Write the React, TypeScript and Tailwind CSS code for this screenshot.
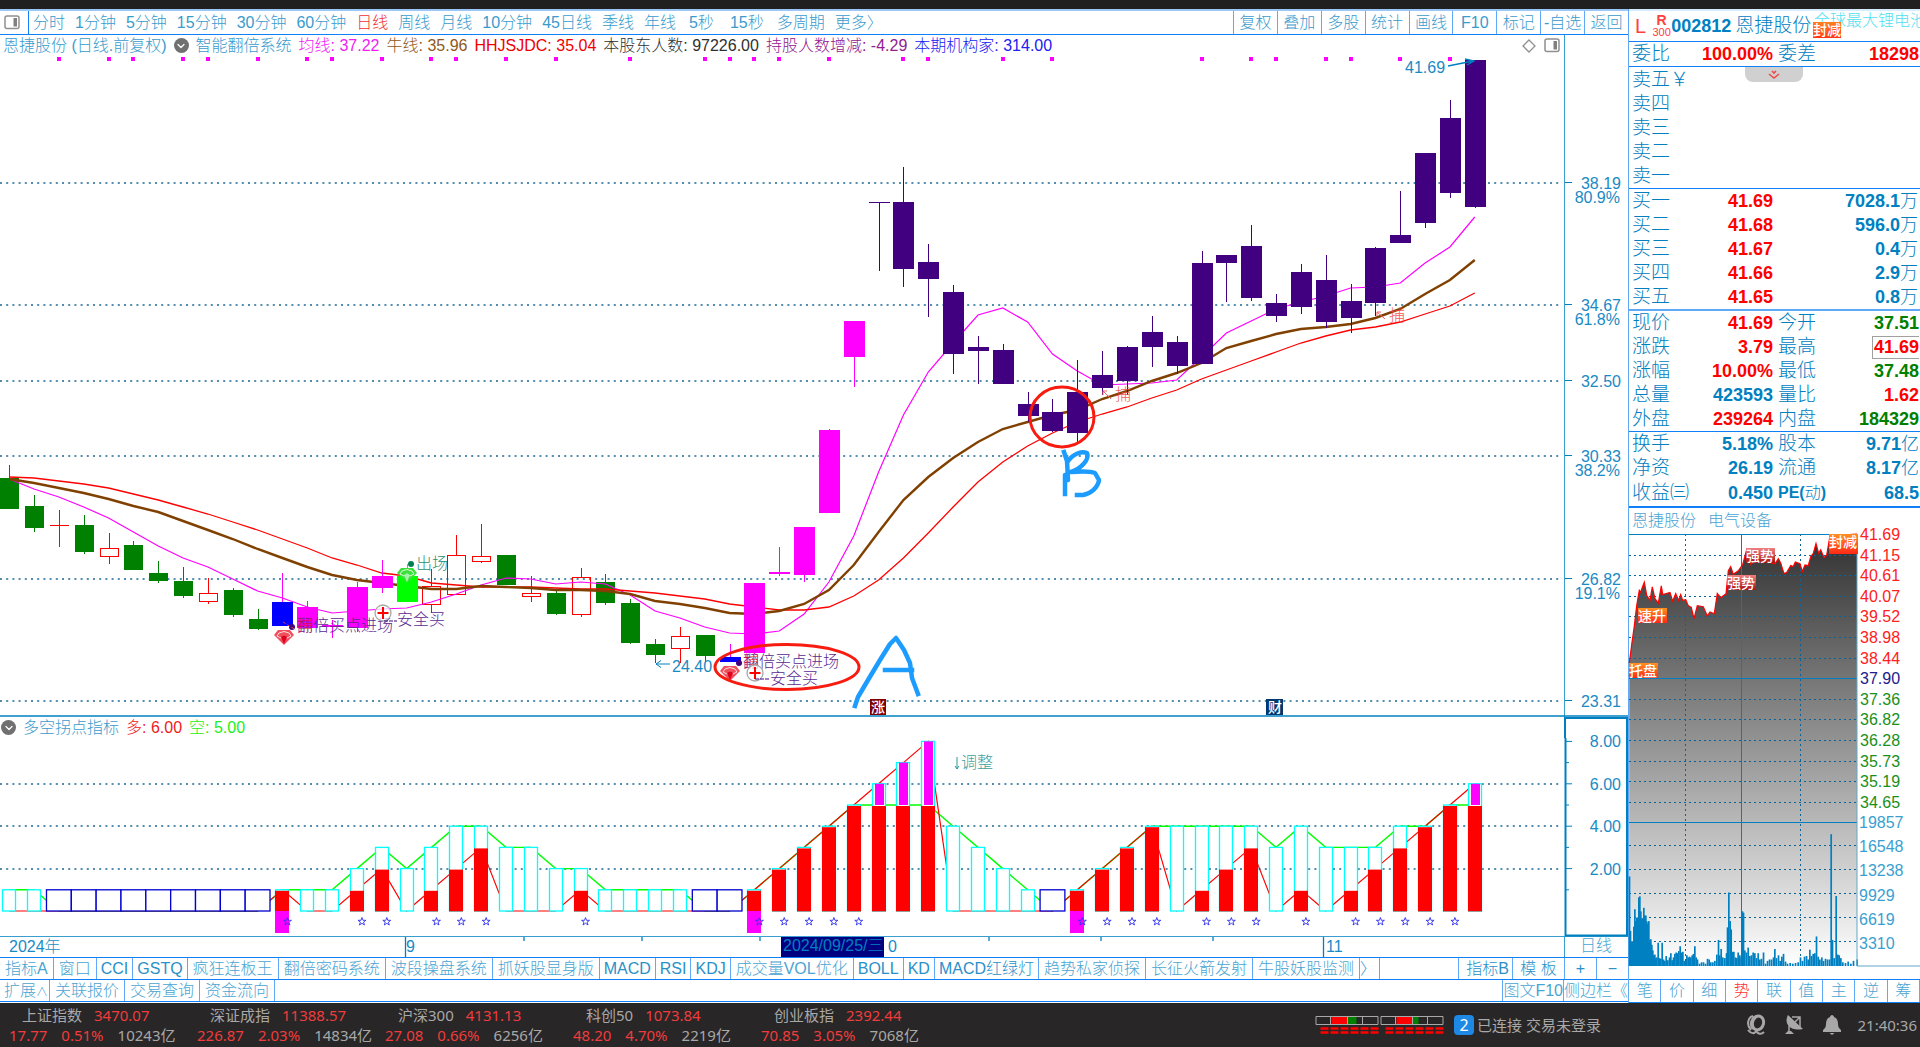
import React from "react";
import { ChevronDown } from "lucide-react";

type Tone = "green" | "red" | "magenta" | "blue" | "lime" | "purple";
// high, body top, body bottom, low, tone
type Candle = [number, number, number, number, Tone];

const xAt = (i: number) => 9.2 + 24.84 * i;

const candles: Candle[] = [
  [465, 478, 509, 509, "green"],
  [495, 506, 528, 532, "green"],
  [510, 525, 525, 547, "red"],
  [515, 525, 552, 554, "green"],
  [533, 548, 556, 564, "red"],
  [541, 545, 570, 570, "green"],
  [561, 573, 581, 583, "green"],
  [567, 581, 596, 598, "green"],
  [578, 593, 601, 604, "red"],
  [588, 590, 615, 617, "green"],
  [609, 619, 629, 630, "green"],
  [573, 602, 626, 626, "blue"],
  [601, 607, 628, 628, "magenta"],
  [620, 625, 627, 638, "magenta"],
  [582, 587, 628, 632, "magenta"],
  [560, 576, 588, 593, "magenta"],
  [564, 576, 602, 602, "lime"],
  [569, 586, 604, 613, "red"],
  [535, 555, 594, 594, "red"],
  [524, 556, 561, 563, "red"],
  [555, 555, 585, 585, "green"],
  [576, 593, 596, 602, "red"],
  [590, 593, 614, 615, "green"],
  [568, 577, 614, 617, "red"],
  [574, 582, 603, 605, "green"],
  [599, 603, 643, 644, "green"],
  [639, 644, 655, 663, "green"],
  [627, 636, 648, 663, "red"],
  [635, 635, 656, 662, "green"],
  [644, 657, 662, 662, "blue"],
  [583, 583, 653, 654, "magenta"],
  [547, 572, 574, 576, "magenta"],
  [527, 527, 575, 582, "magenta"],
  [429, 430, 513, 513, "magenta"],
  [321, 321, 357, 387, "magenta"],
  [202, 202, 203, 271, "purple"],
  [167, 202, 269, 287, "purple"],
  [244, 262, 279, 317, "purple"],
  [285, 292, 354, 374, "purple"],
  [336, 347, 351, 384, "purple"],
  [344, 350, 384, 384, "purple"],
  [392, 404, 416, 422, "purple"],
  [399, 412, 431, 432, "purple"],
  [360, 392, 433, 442, "purple"],
  [351, 375, 388, 395, "purple"],
  [346, 347, 381, 395, "purple"],
  [316, 332, 347, 367, "purple"],
  [336, 342, 366, 374, "purple"],
  [251, 263, 364, 364, "purple"],
  [255, 255, 263, 302, "purple"],
  [225, 246, 298, 301, "purple"],
  [294, 303, 316, 322, "purple"],
  [264, 272, 307, 314, "purple"],
  [255, 280, 322, 328, "purple"],
  [284, 301, 318, 333, "purple"],
  [247, 248, 303, 316, "purple"],
  [191, 235, 243, 243, "purple"],
  [153, 153, 223, 228, "purple"],
  [100, 118, 193, 198, "purple"],
  [60, 60, 207, 208, "purple"],
];

const avgLine = [479, 489, 497, 507, 518, 532, 546, 558, 567, 579, 591, 598, 607, 613, 611, 609, 608, 602, 594, 585, 578, 579, 584, 582, 584, 595, 611, 618, 627, 633, 634, 631, 614, 582, 536, 472, 415, 372, 343, 315, 308, 322, 354, 371, 385, 384, 383, 380, 357, 333, 321, 309, 302, 296, 288, 287, 283, 263, 247, 217];
const bullLine = [479, 483, 488, 493, 499, 506, 512, 521, 530, 539, 549, 558, 567, 575, 580, 583, 586, 589, 589, 586, 587, 588, 590, 590, 591, 594, 601, 604, 608, 613, 614, 611, 604, 590, 565, 532, 500, 477, 458, 442, 429, 422, 415, 410, 399, 391, 381, 373, 363, 348, 341, 334, 329, 327, 324, 318, 309, 294, 280, 260];
const redLine = [477, 478, 481, 484, 488, 494, 500, 507, 514, 522, 530, 539, 548, 558, 565, 573, 576, 583, 585, 587, 587, 587, 588, 589, 589, 591, 593, 596, 599, 604, 607, 610, 610, 607, 596, 580, 558, 533, 507, 482, 462, 446, 433, 422, 414, 407, 398, 390, 379, 370, 361, 352, 343, 336, 330, 327, 322, 314, 306, 293];

const shortSide = [1, 1, 0, 0, 0, 0, 0, 0, 0, 0, 0, 1, 1, 1, 2, 3, 2, 3, 4, 4, 3, 3, 2, 2, 1, 1, 1, 1, 0, 0, 1, 2, 3, 4, 5, 5, 5, 5, 4, 3, 2, 1, 0, 1, 2, 3, 4, 4, 4, 4, 4, 3, 4, 3, 3, 3, 4, 4, 5, 5];
const longSide = [0, 0, 0, 0, 0, 0, 0, 0, 0, 0, 0, 1, 0, 0, 1, 2, 0, 1, 2, 3, 0, 0, 0, 1, 0, 0, 0, 0, 0, 0, 1, 2, 3, 4, 5, 6, 7, 8, 0, 0, 0, 0, 0, 1, 2, 3, 4, 0, 1, 2, 3, 0, 1, 0, 1, 2, 3, 4, 5, 6];
const boxAt = [2, 3, 4, 5, 6, 7, 8, 9, 10, 28, 29, 42];
const entryAt = [11, 30, 43];
const starAt = [11, 14, 15, 17, 18, 19, 23, 30, 31, 32, 33, 34, 43, 44, 45, 46, 48, 49, 50, 52, 54, 55, 56, 57, 58];
const dotAt = [2, 4, 5, 7, 8, 10, 12, 13, 15, 17, 18, 20, 22, 25, 28, 29, 30, 31, 33, 36, 37, 40, 42, 48, 50, 51, 53, 54, 56, 58];

const toneColor: Record<Tone, string> = {
  green: "#008000",
  red: "#ff0000",
  magenta: "#ff00ff",
  blue: "#0000ff",
  lime: "#00ff00",
  purple: "#400080",
};

const line = (ys: number[]) => ys.map((y, i) => `${xAt(i)},${y}`).join(" ");

function CandleMark({ i, c }: { i: number; c: Candle }) {
  const [hi, top, bot, lo, tone] = c;
  const x = Math.round(xAt(i));
  const color = toneColor[tone];
  const narrow = tone === "green" || tone === "red";
  const w = narrow ? 19 : 21;
  const h = bot - top;
  const wick = tone === "blue" ? "#ff00ff" : color;
  return (
    <g shapeRendering="crispEdges">
      <rect x={x - 0.5} y={hi} width={1.3} height={Math.max(top - hi, 0)} fill={wick} />
      <rect x={x - 0.5} y={bot} width={1.3} height={Math.max(lo - bot, 0)} fill={color} />
      {tone === "red" && h > 0 ? (
        <rect x={x - 8.5} y={top + 0.5} width={18} height={h} fill="none" stroke={color} />
      ) : (
        <rect x={x - (narrow ? 9 : 10)} y={top} width={w} height={Math.max(h, 1)} fill={color} />
      )}
    </g>
  );
}

function Gem({ x, y, light, dark }: { x: number; y: number; light: string; dark: string }) {
  return (
    <g transform={`translate(${x} ${y})`}>
      <path d="M-6-7H6L10-2L0 8L-10-2Z" fill={light} />
      <path d="M-5-4Q0-7 5-4L7-1L3 1L0-1L-3 1L-7-1Z" fill="none" stroke="#fff" strokeWidth="1" opacity=".8" />
      <path d="M-3 0Q0-3 3 0L0 7Z" fill={dark} />
    </g>
  );
}

function SafeMark({ x, y }: { x: number; y: number }) {
  return (
    <g transform={`translate(${x} ${y})`}>
      <circle r="8" fill="#fff" fillOpacity=".7" stroke="#a8a8a8" strokeWidth="1.3" />
      <path d="M-5.500 0H5.500M0-6V6" stroke="#f00" strokeWidth="2" />
    </g>
  );
}

const gridRows: [number, string, string?][] = [
  [183, "38.19", "80.9%"],
  [305, "34.67", "61.8%"],
  [381, "32.50"],
  [456, "30.33", "38.2%"],
  [579, "26.82", "19.1%"],
  [701, "23.31"],
];

function PriceChart() {
  const isNarrow = (t: Tone) => t === "green" || t === "red";
  return (
    <svg viewBox="0 56 1628 661" className="block h-auto w-full text-base" role="img" aria-label="日线K线图">
      {gridRows.map(([y, price, pct]) => (
        <g key={y}>
          <path d={`M0 ${y}H1560`} stroke="#1a6a94" strokeWidth="1.500" strokeDasharray="2 4.200" />
          <path d={`M1565 ${y - 0.5}H1572`} stroke="#0080c0" />
          <text x="1621" y={y + 6} textAnchor="end" fill="#1a8ac4">{price}</text>
          {pct && <text x="1620" y={y + 20} textAnchor="end" fill="#1a8ac4">{pct}</text>}
        </g>
      ))}
      <path d="M1564.500 56V717" stroke="#3a9fd0" />
      <path d="M0 716H1628" stroke="#0080c0" strokeWidth="1.500" />
      {dotAt.map((i) => <rect key={i} x={Math.round(xAt(i)) - 2} y="57" width="4" height="4" fill="#f0f" />)}
      {candles.map((c, i) => (isNarrow(c[4]) ? <CandleMark key={i} i={i} c={c} /> : null))}
      <polyline points={line(avgLine)} fill="none" stroke="#f0f" strokeWidth="1.200" />
      <polyline points={line(redLine)} fill="none" stroke="#f00" strokeWidth="1.300" />
      <polyline points={line(bullLine)} fill="none" stroke="#804000" strokeWidth="2.400" />
      {candles.map((c, i) => (isNarrow(c[4]) ? null : <CandleMark key={i} i={i} c={c} />))}

      <Gem x={407} y={575} light="#3be03b" dark="#a4f5a4" />
      <circle cx="411" cy="564" r="3" fill="#008050" />
      <text x="416" y="569" fill="#2a9070">出场</text>
      <Gem x={284} y={637} light="#f0505c" dark="#e00020" />
      <circle cx="292" cy="627" r="3" fill="#400080" />
      <path d="M283 622L296 630" stroke="#f04040" strokeDasharray="3 2" />
      <text x="297" y="631" fill="#5a2a90">翻倍买点进场</text>
      <text x="297" y="631" fill="#f00" opacity=".6">捕</text>
      <SafeMark x={383} y={613} />
      <path d="M384 621H397" stroke="#400080" strokeDasharray="4 1" />
      <text x="397" y="625" fill="#5a2a90">安全买</text>

      <path d="M656 664H670M656 664L661 660.500M656 664L661 667.500" fill="none" stroke="#0080c0" />
      <text x="672" y="672" fill="#1a8ac4">24.40</text>
      <Gem x={730} y={673} light="#f0505c" dark="#e00020" />
      <circle cx="739" cy="663" r="3" fill="#400080" />
      <text x="743" y="667" fill="#5a2a90">翻倍买点进场</text>
      <text x="743" y="667" fill="#f00" opacity=".6">捕</text>
      <SafeMark x={755} y={673} />
      <path d="M755 679H769" stroke="#400080" strokeDasharray="4 1" />
      <text x="770" y="684" fill="#5a2a90">安全买</text>

      <path d="M1111 399L1103 391M1103 395V391H1107" fill="none" stroke="#f06060" />
      <text x="1115" y="400" fill="#f04040" opacity=".85">捕</text>
      <path d="M1385 319L1377 312M1377 316V312H1381" fill="none" stroke="#f06060" />
      <text x="1389" y="321" fill="#f04040" opacity=".85">捕</text>

      <text x="1405" y="73" fill="#1a8ac4">41.69</text>
      <path d="M1448 66L1473 61M1465 59L1474 61L1467 65" fill="none" stroke="#0080c0" strokeWidth="1.300" />

      <rect x="870" y="699" width="16" height="16" fill="#800000" />
      <text x="871" y="712" fill="#fff" fontSize="14" fontWeight="500">涨</text>
      <rect x="1266" y="699" width="17" height="16" fill="#003870" />
      <text x="1268" y="712" fill="#fff" fontSize="14" fontWeight="500">财</text>

      <g fill="none" stroke="#f81c10" strokeWidth="3">
        <ellipse cx="787" cy="667" rx="72" ry="22.500" />
        <ellipse cx="1062" cy="417" rx="32" ry="30" />
      </g>
      <g fill="none" stroke="#1c9cff" strokeWidth="4.500" strokeLinecap="square" strokeLinejoin="round">
        <path d="M855 706L858 697L868 680L880 660L890 644L896 638L904 650L910 663L912 678L918 694M885 670H912" />
        <path d="M1064 452L1067 461L1068 480L1065 475V494M1068 461C1074 453 1082 451 1087 453C1090 460 1080 469 1071 472C1083 471 1090 471 1095 473L1099 480C1098 488 1090 494 1083 495H1077" />
      </g>
    </svg>
  );
}

function TurningChart() {
  const y0 = 911;
  const u = 21.2;
  const y = (v: number) => y0 - u * v;
  return (
    <svg viewBox="0 738 1628 198" className="relative block h-auto w-full overflow-visible text-base" role="img" aria-label="多空拐点指标图">
      {[2, 4, 6].map((v) => (
        <path key={v} d={`M0 ${Math.round(y(v))}H1560`} stroke="#1a6a94" strokeWidth="1.500" strokeDasharray="2 4.200" />
      ))}
      <path d="M1565.500 738V935.500H1627V738" fill="none" stroke="#0080c0" strokeWidth="2" />
      {[8, 6, 4, 2].map((v) => (
        <g key={v}>
          <path d={`M1565 ${y(v)}H1572M1565 ${y(v - 1)}H1569`} stroke="#0080c0" />
          <text x="1621" y={y(v) + 6} textAnchor="end" fill="#1a8ac4">{v.toFixed(2)}</text>
        </g>
      ))}
      <polyline points={line(shortSide.map(y))} fill="none" stroke="#0f0" strokeWidth="1.400" />
      <polyline points={line(longSide.map(y))} fill="none" stroke="#f00" strokeWidth="1.200" />
      {boxAt.map((i) => (
        <rect key={i} x={xAt(i) - 12.4} y={y(1)} width="24.800" height={u} fill="#fff" stroke="#0000d0" strokeWidth="1.300" />
      ))}
      {shortSide.map((s, i) => {
        if (boxAt.includes(i)) return null;
        const l = longSide[i];
        const x = Math.round(xAt(i)) - 7;
        const solid = Math.min(l, 5);
        return (
          <g key={i}>
            <rect x={x + 0.5} y={y(Math.max(s, l))} width="13" height={u * Math.max(s, l)} fill="#fff" stroke="#0ff" strokeWidth="1.300" />
            {solid > 0 && <rect x={x} y={y(solid) + 1} width="14" height={u * solid - 0.6} fill="#f00" />}
            {l > 5 && <rect x={x + 3} y={y(l)} width="9" height={u * (l - 5)} fill="#f0f" />}
            {entryAt.includes(i) && <rect x={x} y={y0} width="14" height="22" fill="#f0f" />}
          </g>
        );
      })}
      {starAt.map((i) => (
        <path
          key={i}
          transform={`translate(${xAt(i) + 5} 921.5)`}
          d="M0-4L1-1.200H4L1.600.600L2.500 3.500L0 1.800L-2.500 3.500L-1.600.600L-4-1.200H-1Z"
          fill="none"
          stroke="#3030f0"
          strokeWidth=".9"
        />
      ))}
      <path d="M957 757V769M955 766L957 769L959 766" fill="none" stroke="#2a9a9a" />
      <text x="961" y="768" fill="#40a0a0">调整</text>
    </svg>
  );
}

function DateAxis() {
  return (
    <svg viewBox="0 936 1628 21" className="block h-auto w-full text-base" role="img" aria-label="日期轴">
      <path d="M0 936.500H1628M1564.500 936V957" stroke="#3a9fd0" />
      <path d="M405.500 937V957M1323.500 937V957M524 937V941M642 937V941M760 937V941M989 937V941M1101 937V941M1213 937V941" stroke="#0080c0" strokeWidth="1.300" />
      <g fill="#1a8ac4">
        <text x="9" y="952">2024年</text>
        <text x="406" y="952">9</text>
        <text x="888" y="952">0</text>
        <text x="1326" y="952">11</text>
        <text x="1596" y="951" textAnchor="middle" fill="#4aa4d2">日线</text>
      </g>
      <rect x="781" y="937" width="103" height="20" fill="#000080" />
      <text x="783" y="951" fill="#0080c0">2024/09/25/三</text>
    </svg>
  );
}

const trend: [number, number][] = [[28, 465], [36, 405], [42, 365], [50, 300], [58, 256], [62, 262], [66, 250], [73, 233], [80, 270], [90, 285], [97, 246], [105, 280], [115, 293], [124, 243], [128, 268], [150, 262], [158, 287], [167, 265], [176, 285], [182, 268], [188, 285], [197, 283], [205, 300], [214, 305], [222, 337], [232, 300], [250, 303], [262, 330], [270, 318], [283, 323], [292, 265], [302, 277], [318, 266], [325, 200], [332, 188], [340, 210], [355, 200], [368, 182], [380, 140], [393, 182], [405, 165], [430, 172], [465, 180], [475, 165], [482, 178], [492, 208], [500, 205], [512, 185], [520, 188], [526, 175], [540, 180], [547, 202], [555, 183], [565, 185], [572, 160], [580, 150], [588, 122], [596, 150], [602, 140], [612, 162], [620, 155], [630, 100], [711, 95]];

const volume: [number, number][] = [[26, 1076], [29, 1232], [32, 1262], [36, 1262], [39, 1220], [42, 1170], [45, 1204], [48, 1194], [51, 1194], [54, 1136], [57, 1133], [60, 1176], [63, 1196], [66, 1196], [69, 1166], [72, 1188], [75, 1188], [78, 1205], [81, 1212], [84, 1204], [87, 1258], [90, 1256], [93, 1272], [96, 1288], [99, 1302], [102, 1300], [105, 1310], [108, 1308], [112, 1266], [116, 1310], [120, 1312], [124, 1266], [128, 1314], [132, 1318], [136, 1304], [141, 1316], [146, 1308], [150, 1296], [154, 1316], [158, 1308], [162, 1298], [166, 1294], [170, 1296], [174, 1290], [178, 1276], [182, 1294], [186, 1292], [190, 1318], [194, 1318], [198, 1302], [202, 1308], [206, 1306], [210, 1308], [214, 1302], [218, 1298], [222, 1276], [226, 1308], [230, 1314], [236, 1326], [242, 1322], [248, 1322], [254, 1326], [260, 1312], [265, 1314], [270, 1322], [276, 1322], [282, 1318], [288, 1300], [293, 1258], [297, 1302], [301, 1284], [306, 1308], [312, 1310], [317, 1296], [320, 1222], [324, 1122], [328, 1204], [331, 1228], [335, 1292], [339, 1292], [344, 1308], [348, 1310], [352, 1294], [357, 1302], [361, 1308], [365, 1176], [368, 1180], [372, 1288], [377, 1294], [382, 1280], [387, 1304], [392, 1302], [397, 1294], [402, 1296], [407, 1310], [412, 1296], [417, 1314], [422, 1312], [428, 1294], [434, 1326], [440, 1318], [446, 1314], [452, 1314], [458, 1308], [462, 1284], [467, 1310], [473, 1302], [478, 1318], [483, 1306], [488, 1298], [494, 1320], [500, 1326], [508, 1324], [516, 1326], [524, 1324], [532, 1322], [539, 1308], [545, 1318], [551, 1306], [557, 1304], [562, 1314], [567, 1286], [572, 1304], [577, 1298], [582, 1296], [587, 1248], [592, 1306], [597, 1314], [603, 1308], [608, 1318], [614, 1312], [620, 1314], [626, 1314], [631, 955], [635, 1258], [640, 1310], [646, 1132], [651, 1300], [655, 1302], [660, 1310], [666, 1322], [674, 1324], [682, 1320], [690, 1326], [698, 1318], [709, 1314]];

const priceTicks: [string, string][] = [["41.69", "#ff2020"], ["41.15", "#ff2020"], ["40.61", "#ff2020"], ["40.07", "#ff2020"], ["39.52", "#ff2020"], ["38.98", "#ff2020"], ["38.44", "#ff2020"], ["37.90", "#202090"], ["37.36", "#1a901a"], ["36.82", "#1a901a"], ["36.28", "#1a901a"], ["35.73", "#1a901a"], ["35.19", "#1a901a"], ["34.65", "#1a901a"]];
const volumeTicks = ["19857", "16548", "13238", "9929", "6619", "3310"];

const px = (v: number) => 1620 + v / 3;
const py = (v: number) => 500 + v / 2.866;

function IntradayChart() {
  const pts = trend.map(([a, b]) => `${px(a).toFixed(1)},${py(b).toFixed(1)}`).join(" ");
  const tags: [number, number, string, string][] = [
    [1746, 547, "强势", "url(#tagRed)"],
    [1727, 574, "强势", "url(#tagRed)"],
    [1638, 607, "速升", "url(#tagOrange)"],
    [1629, 662, "托盘", "url(#tagOrange)"],
    [1829, 533, "封减", "url(#tagOrange)"],
  ];
  return (
    <svg viewBox="1629 533 291 445" className="relative block h-auto w-full overflow-visible text-base" role="img" aria-label="分时走势图">
      <defs>
        <linearGradient id="shade" gradientUnits="userSpaceOnUse" x1="0" y1="540" x2="0" y2="965">
          <stop offset="0" stopColor="#333" />
          <stop offset=".33" stopColor="#777" />
          <stop offset=".66" stopColor="#b8b8b8" />
          <stop offset="1" stopColor="#fff" />
        </linearGradient>
        <linearGradient id="tagRed" x1="0" y1="0" x2="0" y2="1">
          <stop offset="0" stopColor="#f08080" />
          <stop offset="1" stopColor="#a81010" />
        </linearGradient>
        <linearGradient id="tagOrange" x1="0" y1="0" x2="0" y2="1">
          <stop offset="0" stopColor="#ff9020" />
          <stop offset="1" stopColor="#ff2818" />
        </linearGradient>
      </defs>
      <polygon points={`1629,965 ${pts} 1857,965`} fill="url(#shade)" />
      {priceTicks.map(([label, color], i) => {
        const y = 533 + 20.6 * i;
        return (
          <g key={label}>
            {i !== 7 && i > 0 && <path d={`M1629 ${Math.round(y) + 0.5}H1857`} stroke="#0a6496" strokeDasharray="2 3" />}
            <text x="1860" y={y + 6} fill={color}>{label}</text>
          </g>
        );
      })}
      {volumeTicks.map((label, i) => (
        <g key={label}>
          {i > 0 && <path d={`M1629 ${820.5 + 24 * i}H1857`} stroke="#0a6496" strokeDasharray="2 3" />}
          <text x="1859" y={827 + 24.2 * i} fill="#3a9fd0">{label}</text>
        </g>
      ))}
      <path d="M1685.500 533V965M1800.500 533V965" stroke="#0a6496" strokeDasharray="2 3" />
      {volume.map(([a, b]) => <rect key={a} x={px(a)} y={py(b)} width="1.700" height={965 - py(b)} fill="#0080c0" />)}
      <path d="M1629 533.500H1857M1629 677.500H1857M1629 821.500H1857M1741.500 533V965" stroke="#0080c0" />
      <path d="M1857 533V965H1920" fill="none" stroke="#60a8c8" />
      <polyline points={pts} fill="none" stroke="#f00" strokeWidth="1.200" />
      {tags.map(([x, y, t, fill]) => (
        <g key={`${x}`}>
          <rect x={x} y={y} width="29" height={x === 1829 ? 20 : 15} fill={fill} />
          <text x={x} y={y + 13} fill="#fff" fontSize="14" fontWeight="500">{t}</text>
        </g>
      ))}
    </svg>
  );
}

const periods = ["分时", "1分钟", "5分钟", "15分钟", "30分钟", "60分钟", "日线", "周线", "月线", "10分钟", "45日线", "季线", "年线", "5秒", "15秒", "多周期", "更多〉"];
const tools = ["复权", "叠加", "多股", "统计", "画线", "F10", "标记", "-自选", "返回"];
const indicatorTabs = ["指标A", "窗口", "CCI", "GSTQ", "疯狂连板王", "翻倍密码系统", "波段操盘系统", "抓妖股显身版", "MACD", "RSI", "KDJ", "成交量VOL优化", "BOLL", "KD", "MACD红绿灯", "趋势私家侦探", "长征火箭发射", "牛股妖股监测"];

function PanelIcon() {
  return (
    <svg viewBox="0 0 16 15" className="h-[15px] w-4" aria-hidden="true">
      <rect x="1" y="1" width="14" height="12.500" rx="2" fill="none" stroke="#909090" strokeWidth="1.500" />
      <rect x="9.500" y="3" width="3.500" height="8.500" fill="#808080" />
    </svg>
  );
}

function FoldButton({ label }: { label: string }) {
  return (
    <button type="button" aria-label={label} className="flex size-[15px] shrink-0 items-center justify-center rounded-full bg-[#707070] text-white">
      <ChevronDown size={12} strokeWidth={2.5} />
    </button>
  );
}

function Toolbar() {
  return (
    <nav className="flex h-[26px] items-stretch border-t-2 border-b border-t-[#9cc8f8] border-b-[#1080f8] whitespace-nowrap text-[#3a9bcd]">
      <button type="button" aria-label="布局" className="flex w-[29px] items-center border-r border-[#1080f8] pl-1">
        <PanelIcon />
      </button>
      <div className="flex flex-1 items-center gap-[10px] pl-1">
        {periods.map((p) => (
          <button
            type="button"
            key={p}
            className={p === "日线" ? "text-[#f03030]" : p.endsWith("秒") ? "px-[3px]" : ""}
          >
            {p}
          </button>
        ))}
      </div>
      <div className="grid w-[395px] grid-cols-9">
        {tools.map((t) => (
          <button type="button" key={t} className="border-l border-[#60a8f8]">{t}</button>
        ))}
      </div>
    </nav>
  );
}

function PriceHeader() {
  return (
    <div className="flex h-[21px] whitespace-nowrap">
      <div className="flex flex-1 items-center gap-[7px] border-r border-[#3a9fd0] pl-[3px]">
        <span className="text-[#3a9bcd]">恩捷股份 (日线.前复权)</span>
        <FoldButton label="展开主图指标" />
        <span className="text-[#3a9bcd]">智能翻倍系统</span>
        <span className="text-[#f020f0]">均线: 37.22</span>
        <span className="text-[#905820]">牛线: 35.96</span>
        <span className="text-[#f00000]">HHJSJDC: 35.04</span>
        <span className="text-[#303030]">本股东人数: 97226.00</span>
        <span className="text-[#902090]">持股人数增减: -4.29</span>
        <span className="text-[#2020f0]">本期机构家: 314.00</span>
        <div className="ml-auto flex items-center gap-2 pr-1">
          <svg viewBox="0 0 14 14" className="size-[14px]" aria-hidden="true">
            <path d="M7 1L13 7L7 13L1 7Z" fill="none" stroke="#909090" strokeWidth="1.300" />
          </svg>
          <PanelIcon />
        </div>
      </div>
      <div className="w-[63px]" />
    </div>
  );
}

function TurningHeader() {
  return (
    <div className="flex h-[21px] whitespace-nowrap">
      <div className="flex flex-1 items-center gap-[7px] pl-px">
        <FoldButton label="展开副图指标" />
        <span className="text-[#3a9bcd]">多空拐点指标</span>
        <span className="text-[#f02020]">多: 6.00</span>
        <span className="text-[#20f020]">空: 5.00</span>
      </div>
      <div className="w-16 border-t-2 border-r-2 border-l-2 border-[#0080c0]" />
    </div>
  );
}

function IndicatorTabs() {
  return (
    <div className="flex h-[22px] items-stretch border-t border-[#1080f8] whitespace-nowrap text-[#2a90c8]">
      {indicatorTabs.map((t) => (
        <button
          type="button"
          key={t}
          className={/^[A-Z]/.test(t) ? "border-r border-[#60a8f8] px-1" : "border-r border-[#60a8f8] px-[5px] text-[#4aa4d2]"}
        >
          {t}
        </button>
      ))}
      <button type="button" aria-label="更多指标" className="w-5 border-r border-[#60a8f8] text-left">〉</button>
      <div className="flex-1" />
      <button type="button" className="w-[54px] border-l border-[#60a8f8] pl-1">指标B</button>
      <button type="button" className="w-[52px] border-l border-[#60a8f8]">模 板</button>
      <button type="button" aria-label="增加指标窗口" className="w-8 border-l border-[#60a8f8]">+</button>
      <button type="button" aria-label="减少指标窗口" className="w-8 border-l border-[#60a8f8]">−</button>
    </div>
  );
}

function ExtensionTabs() {
  return (
    <div className="flex h-[23px] items-stretch border-y border-[#1080f8] whitespace-nowrap text-[#4aa4d2]">
      <button type="button" className="w-[50px] border-r border-[#60a8f8] pl-1 text-left">扩展<span className="text-xs">∧</span></button>
      {["关联报价", "交易查询", "资金流向"].map((t) => (
        <button type="button" key={t} className="w-[75px] border-r border-[#60a8f8]">{t}</button>
      ))}
      <div className="flex-1" />
      <button type="button" className="border-l border-[#60a8f8]">图文F10</button>
      <button type="button" className="w-[65px] border-l border-[#60a8f8] text-left">侧边栏《</button>
    </div>
  );
}

const sells = ["卖五", "卖四", "卖三", "卖二", "卖一"];
const buys: [string, string, string][] = [["买一", "41.69", "7028.1"], ["买二", "41.68", "596.0"], ["买三", "41.67", "0.4"], ["买四", "41.66", "2.9"], ["买五", "41.65", "0.8"]];

const RED = "text-[#ff0000]";
const GREEN = "text-[#008000]";
const BLUE = "text-[#0080c0]";
type Quote = [string, string, string, string, string, string];
const committee: Quote[] = [["委比", "100.00%", RED, "委差", "18298", RED]];
const quotes: Quote[] = [
  ["现价", "41.69", RED, "今开", "37.51", GREEN],
  ["涨跌", "3.79", RED, "最高", "41.69", RED],
  ["涨幅", "10.00%", RED, "最低", "37.48", GREEN],
  ["总量", "423593", BLUE, "量比", "1.62", RED],
  ["外盘", "239264", RED, "内盘", "184329", GREEN],
];
const basics: Quote[] = [
  ["换手", "5.18%", BLUE, "股本", "9.71亿", BLUE],
  ["净资", "26.19", BLUE, "流通", "8.17亿", BLUE],
  ["收益㈢", "0.450", BLUE, "PE(动)", "68.5", BLUE],
];

function Num({ children }: { children: string }) {
  const unit = /[万亿]$/.test(children) ? children.slice(-1) : "";
  return (
    <>
      <b className="text-lg/6 font-bold">{unit ? children.slice(0, -1) : children}</b>
      {unit && <span className="text-lg/6">{unit}</span>}
    </>
  );
}

function QuoteTable({ rows }: { rows: Quote[] }) {
  return (
    <table className="w-full table-fixed border-collapse">
      <tbody>
        {rows.map(([a, av, ac, b, bv, bc]) => (
          <tr key={a} className="h-6">
            <th scope="row" className="w-[58px] p-0 pl-[3px] text-left text-[19px]/6 font-light whitespace-nowrap text-[#0080c0]">{a}</th>
            <td className={`w-[86px] p-0 text-right ${ac}`}><Num>{av}</Num></td>
            <th scope="row" className="w-14 p-0 pl-[5px] text-left text-[19px]/6 font-light whitespace-nowrap text-[#0080c0]">
              {b === "PE(动)" ? <span className="text-base/6"><b className="font-bold">PE(</b>动<b className="font-bold">)</b></span> : b}
            </th>
            <td className={`p-0 pr-px text-right ${bc}`}>
              {b === "最高" ? <span className="inline-block border border-r-0 border-[#a0a0a0] pl-px leading-5"><b className="text-lg/5 font-bold">{bv}</b></span> : <Num>{bv}</Num>}
            </td>
          </tr>
        ))}
      </tbody>
    </table>
  );
}

function QuotePanel() {
  return (
    <aside className="flex w-[292px] shrink-0 flex-col border-l border-[#60a8f8]">
      <header className="relative flex h-[33px] items-center border-t-2 border-b border-t-[#d8ecff] border-b-[#1080f8] pl-1.5 whitespace-nowrap">
        <span className="text-xl text-[#ff4040]">L</span>
        <span className="ml-1.5 flex w-[19px] flex-col items-center text-[#ff4040]">
          <b className="text-sm/[12px] font-bold">R</b>
          <span className="text-[11px]/[12px]">300</span>
        </span>
        <b className="text-lg font-bold text-[#0080c0]">002812</b>
        <h1 className="ml-1 text-[19px] text-[#0080c0]">恩捷股份</h1>
        <span className="absolute top-0 left-[185px] w-[106px] overflow-hidden text-base/5 text-[#50e0f0]">全球最大锂电池隔膜</span>
        <span className="absolute top-[11px] left-[184px] bg-gradient-to-b from-[#ff8020] to-[#ff3018] text-sm/4 font-medium text-white">封减</span>
      </header>
      <section className="border-b border-[#1080f8]"><QuoteTable rows={committee} /></section>
      <section className="relative border-b border-[#1080f8] pt-px">
        <table className="w-full border-collapse">
          <tbody>
            {sells.map((s, i) => (
              <tr key={s} className="h-6">
                <th scope="row" className="p-0 pl-[3px] text-left text-[19px]/6 font-light text-[#0080c0]">{s}{i === 0 && "￥"}</th>
              </tr>
            ))}
          </tbody>
        </table>
        <button type="button" aria-label="展开更多档位" className="absolute top-0 left-[116px] flex h-[15px] w-[58px] items-center justify-center rounded-b-lg bg-[#d0d0d0]">
          <svg viewBox="0 0 12 10" className="h-[10px] w-3" aria-hidden="true">
            <path d="M4 1L6 3L8 1M1 4L6 8L11 4" fill="none" stroke="#f04848" strokeWidth="1.600" />
          </svg>
        </button>
      </section>
      <section className="border-b-2 border-[#60a8f8]">
        <table className="w-full table-fixed border-collapse">
          <tbody>
            {buys.map(([b, p, v]) => (
              <tr key={b} className="h-6">
                <th scope="row" className="w-[58px] p-0 pl-[3px] text-left text-[19px]/6 font-light text-[#0080c0]">{b}</th>
                <td className="w-[86px] p-0 text-right text-[#ff0000]"><Num>{p}</Num></td>
                <td className="p-0 pr-0.5 text-right text-[#0080c0]"><Num>{`${v}万`}</Num></td>
              </tr>
            ))}
          </tbody>
        </table>
      </section>
      <section className="border-b border-[#1080f8]"><QuoteTable rows={quotes} /></section>
      <section className="border-b-2 border-[#1080f8] pb-px"><QuoteTable rows={basics} /></section>
      <div className="flex h-[26px] items-center gap-3 pl-[3px] text-[#4aa4d2]">
        <span>恩捷股份</span>
        <span>电气设备</span>
      </div>
      <IntradayChart />
      <nav className="grid h-6 grid-cols-9 border-y border-[#1080f8]">
        {["笔", "价", "细", "势", "联", "值", "主", "逆", "筹"].map((t) => (
          <button type="button" key={t} className={t === "势" ? "border-r border-[#60a8f8] text-[#ff3030]" : "border-r border-[#60a8f8] text-[#4aa4d2]"}>{t}</button>
        ))}
      </nav>
    </aside>
  );
}

const indexes: [string, string, string, string, string][] = [
  ["上证指数", "3470.07", "17.77", "0.51%", "10243亿"],
  ["深证成指", "11388.57", "226.87", "2.03%", "14834亿"],
  ["沪深300", "4131.13", "27.08", "0.66%", "6256亿"],
  ["科创50", "1073.84", "48.20", "4.70%", "2219亿"],
  ["创业板指", "2392.44", "70.85", "3.05%", "7068亿"],
];

function Meter({ green }: { green: number }) {
  return (
    <svg viewBox="0 0 64 18" className="h-[18px] w-[65px]" aria-hidden="true">
      <rect x="16" y="1" width="16" height="8" fill="#f00" />
      <rect x="32" y="1" width={green} height="8" fill="#008000" />
      <path d="M.500.500H62.500V8.500H.500ZM47 1V8M32 1V8M15 1V8" fill="none" stroke="#a8a8a8" />
      <path d="M5 12.500H63M5 16.500H63" stroke="#f00" strokeWidth="2.500" strokeDasharray="8 2" />
    </svg>
  );
}

function StatusBar() {
  return (
    <footer className="flex h-[45px] items-center border-b border-[#b0a0a0] bg-[#282627] font-['Noto_Sans','Noto_Sans_CJK_SC',sans-serif] text-[15px]/5 font-normal whitespace-nowrap text-[#a8a8a8]">
      {indexes.map(([name, value, diff, pct, amount]) => (
        <div key={name} className="w-[188px] pl-[9px]">
          <div className="flex gap-3 pl-[13px]">
            <span>{name}</span>
            <span className="text-[#f03c3c]">{value}</span>
          </div>
          <div className="flex gap-[14px]">
            <span className="text-[#f03c3c]">{diff}</span>
            <span className="text-[#f03c3c]">{pct}</span>
            <span>{amount}</span>
          </div>
        </div>
      ))}
      <div className="ml-auto flex w-[605px] items-center">
        <Meter green={9} />
        <Meter green={6} />
        <span className="ml-[9px] flex size-5 items-center justify-center rounded-sm bg-[#1e88e5] text-base text-white">2</span>
        <span className="ml-[3px]">已连接 交易未登录</span>
        <div className="ml-auto flex items-center gap-[18px] pr-[3px]">
          <svg viewBox="0 0 20 22" className="h-[22px] w-5" role="img" aria-label="客服">
            <ellipse cx="12" cy="9" rx="5.500" ry="7" transform="rotate(15 12 9)" fill="none" stroke="#a8a8a8" strokeWidth="3" />
            <path d="M7 2C2 3 0 11 5 16M10 2C5 4 3 11 7 15M2 16C5 20 9 20 10 17C12 20 15 21 18 18" fill="none" stroke="#a8a8a8" strokeWidth="2" />
          </svg>
          <svg viewBox="0 0 20 22" className="h-[22px] w-5" role="img" aria-label="行情连接">
            <path d="M4 1C0 8 4 18 19 15Z" fill="#a8a8a8" />
            <path d="M8 3H16V13M16 3L11 8M5 12V19" fill="none" stroke="#a8a8a8" strokeWidth="1.500" />
            <path d="M1 20L4 17H7L10 20Z" fill="#a8a8a8" />
          </svg>
          <svg viewBox="0 0 20 22" className="h-[22px] w-5" role="img" aria-label="消息">
            <path d="M10 1C11 1 12 2 12 3C15 4 16 7 16 10C16 13 17 14 19 16V18H1V16C3 14 4 13 4 10C4 7 5 4 8 3C8 2 9 1 10 1ZM7.500 19H12.500L10 21Z" fill="#a8a8a8" />
          </svg>
          <time className="ml-[-3px]">21:40:36</time>
        </div>
      </div>
    </footer>
  );
}

export default function App() {
  return (
    <div className="min-h-screen w-full overflow-x-hidden bg-white font-['Liberation_Sans','Noto_Sans_CJK_SC',sans-serif] text-base/5 font-light">
      <div className="h-[9px] bg-[#202020]" />
      <main className="flex">
        <div className="min-w-0 flex-1">
          <Toolbar />
          <PriceHeader />
          <PriceChart />
          <TurningHeader />
          <TurningChart />
          <DateAxis />
          <IndicatorTabs />
          <ExtensionTabs />
        </div>
        <QuotePanel />
      </main>
      <StatusBar />
    </div>
  );
}
